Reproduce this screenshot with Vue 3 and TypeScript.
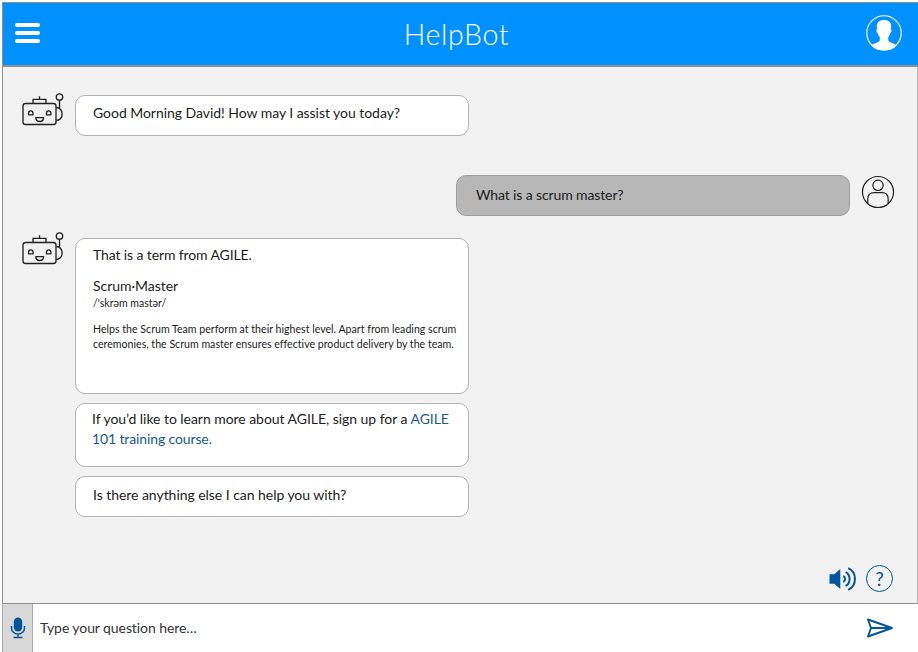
<script setup lang="ts">
import { ref } from 'vue'

const question = ref<string>('')
</script>

<template>
  <div class="app">
    <header class="header">
      <button class="menu" aria-label="Menu"><i /><i /><i /></button>
      <h1 class="title">HelpBot</h1>
      <svg class="account" viewBox="0 0 36 36">
        <circle cx="18" cy="18" r="17.2" fill="none" stroke="#fff" stroke-width="1.1" />
        <path
          fill="#fff"
          d="M18 5c4.800 0 7.300 2.600 7.100 6.600l-.2 2.700c1 .2.700 3-.6 3.800-.4 2-1.200 3.100-2.100 4.200v2.300c0 2.200 1.700 2.800 4.400 3.700 2.100.7 3.300 1.400 4 2.400A17 17 0 0 1 18 35.300 17 17 0 0 1 5.400 30.700c.7-1 1.900-1.700 4-2.400 2.700-.9 4.400-1.500 4.400-3.700v-2.300c-.9-1.100-1.700-2.200-2.100-4.200-1.300-.8-1.600-3.600-.6-3.800l-.2-2.700C10.700 7.600 13.200 5 18 5Z"
        />
      </svg>
    </header>

    <main class="chat">
      <section v-for="turn in ['greeting', 'question', 'answer']" :key="turn" class="turn" :class="turn">
        <svg v-if="turn !== 'question'" class="bot" viewBox="0 0 42 34">
          <g fill="none" stroke="#222" stroke-width="1.35" stroke-linejoin="round">
            <rect x="1" y="10.500" width="33" height="21" rx="2.600" />
            <path d="M11 10.300V6.300h13v4M17.500 6V3.200M37.500 7.500v7.500M34.300 14.500c3.500.4 5.800 3.100 5.800 6.500s-2.300 6.100-5.800 6.500" />
            <circle cx="37.500" cy="4" r="3.200" />
            <path d="M6.600 21.800v-1.500a2.200 2.500 0 0 1 4.400 0v1.500ZM24.500 21.800v-1.500a2.200 2.500 0 0 1 4.400 0v1.500ZM13.800 24.600h7.800c-.3 5.200-7.500 5.200-7.800 0Z" />
          </g>
        </svg>

        <div v-if="turn === 'greeting'" class="bubble short">
          <p class="line hello">Good Morning David! How may I assist you today?</p>
        </div>

        <div v-else-if="turn === 'question'" class="bubble short user">
          <p class="line ask">What is a scrum master?</p>
        </div>

        <div v-else class="stack">
          <article class="bubble definition">
            <p class="line intro">That is a term from AGILE.</p>
            <h2 class="line term">Scrum·Master</h2>
            <p class="phonetic">/'skrəm mastər/</p>
            <p class="meaning">
              Helps the Scrum Team perform at their highest level. Apart from leading scrum<br />
              ceremonies, the Scrum master ensures effective product delivery by the team.
            </p>
          </article>
          <div class="bubble course">
            <p class="line">If you’d like to learn more about AGILE, sign up for a <a>AGILE<br /><span class="rest">101 training course.</span></a></p>
          </div>
          <div class="bubble short closing">
            <p class="line">Is there anything else I can help you with?</p>
          </div>
        </div>

        <svg v-if="turn === 'question'" class="person" viewBox="0 0 34 34">
          <g fill="none" stroke="#222" stroke-width="1.2">
            <circle cx="17" cy="17" r="15.500" />
            <circle cx="17" cy="10.300" r="5.200" />
            <path d="M6.800 28.500V24c0-3.900 2.500-6.300 6.200-6.300h8c3.700 0 6.200 2.400 6.200 6.300v4.500" />
          </g>
        </svg>
      </section>

      <div class="tools">
        <svg class="sound" viewBox="0 0 28 24">
          <path fill="#00569a" d="M.5 7.300h4.800L11.300 2v20l-6-5.300H.5Z" />
          <g fill="none" stroke="#00569a" stroke-width="2">
            <path d="M14.300 9c2.300 1 2.300 5 0 6M16.600 5.100c5.300 2.700 5.300 11.100 0 13.800M19.200 1.200c9 4.200 9 17.400 0 21.600" />
          </g>
        </svg>
        <span class="help">?</span>
      </div>
    </main>

    <footer class="composer">
      <button class="mic" aria-label="Speak">
        <svg viewBox="0 0 16 22">
          <rect x="3.800" y="0.500" width="8.400" height="14" rx="4.200" fill="#00569a" />
          <path d="M1.500 9v2.200a6.500 5.800 0 0 0 13 0V9M8 17v3.500M3.500 20.400h9" fill="none" stroke="#00569a" stroke-width="1.500" />
        </svg>
      </button>
      <input v-model="question" class="entry" placeholder="Type your question here…" />
      <svg class="send" viewBox="0 0 28 20">
        <path d="M2 1.500 26 10 2 18.500 5 10ZM5 10h20" fill="none" stroke="#00569a" stroke-width="1.900" stroke-linejoin="round" />
      </svg>
    </footer>
  </div>
</template>

<style>
body {
  margin: 0;
  background: #fff;
  overflow: hidden;
}
</style>

<style scoped>
.app {
  box-sizing: border-box;
  width: 918px;
  height: 650px;
  margin-top: 2px;
  padding-left: 2px;
  display: flex;
  flex-direction: column;
  font-family: Lato, "Noto Sans", sans-serif;
  font-variant-ligatures: none;
  color: #1c1c1c;
}
.header {
  box-sizing: border-box;
  height: 65px;
  display: grid;
  grid-template-columns: 50px 1fr 52px;
  align-items: center;
  background: #0091ff;
  border: solid #8c8f94;
  border-width: 1px 0 2px 1px;
}
button {
  border: 0;
  padding: 0;
  background: none;
}
.menu {
  margin: 0 0 3px 12px;
  width: 25px;
  display: flex;
  flex-direction: column;
  gap: 4px;
}
.menu i {
  height: 4px;
  border-radius: 2px;
  background: #fff;
}
.title {
  margin: 0 6px 0 0;
  text-align: center;
  color: #fff;
  font-size: 28.500px;
  font-weight: 300;
  letter-spacing: 0.650px;
}
.account {
  width: 36px;
  height: 36px;
  margin-top: -2px;
}
.chat {
  box-sizing: border-box;
  flex: 1;
  min-height: 0;
  background: #f2f2f2;
  border: solid #8f8f8f;
  border-width: 0 0 1px 1px;
  border-right: 1px solid #b9b9b9;
  display: flex;
  flex-direction: column;
}
.turn {
  display: flex;
  align-items: flex-start;
}
.greeting {
  padding: 28px 0 0 19px;
}
.question {
  padding: 39px 22px 0 0;
  justify-content: flex-end;
}
.answer {
  padding: 22px 0 0 19px;
}
.bot {
  width: 42px;
  height: 34px;
  margin: -2.500px 11px 0 0;
  flex: none;
}
.answer .bot {
  margin-top: -6.500px;
}
.bubble {
  box-sizing: border-box;
  width: 394px;
  border: 1px solid #b3b3b3;
  border-radius: 10px;
  background: #fff;
  padding: 0 0 0 17px;
  white-space: nowrap;
}
.short {
  height: 41px;
  padding-top: 7px;
}
.closing {
  padding-top: 8px;
}
.user {
  background: #b7b7b7;
  border-color: #9f9f9f;
  padding-left: 19px;
  padding-top: 9px;
}
.person {
  width: 34px;
  height: 34px;
  margin-left: 11px;
}
.stack {
  display: flex;
  flex-direction: column;
  gap: 9px;
}
.line {
  margin: 0;
  font-size: 14px;
  line-height: 20px;
  font-weight: 400;
  letter-spacing: -0.045px;
}
.ask,
.intro,
.rest {
  letter-spacing: -0.120px;
}
.definition {
  height: 156px;
  padding-top: 6px;
}
.term {
  margin-top: 11px;
}
.phonetic {
  margin: 0;
  font-size: 10.500px;
  line-height: 14px;
}
.meaning {
  margin: 12px 0 0;
  font-size: 10.620px;
  line-height: 15px;
}
.course {
  height: 64px;
  padding: 5px 0 0 16px;
}
a {
  color: #1a5a8a;
}
.tools {
  margin-top: auto;
  padding: 0 24px 11px 0;
  display: flex;
  justify-content: flex-end;
  align-items: center;
  gap: 9px;
}
.sound {
  width: 28px;
  height: 24px;
}
.help {
  box-sizing: border-box;
  width: 27px;
  height: 27px;
  border: 1.500px solid #00569a;
  border-radius: 50%;
  color: #00569a;
  text-align: center;
  font-size: 19px;
  line-height: 25px;
}
.composer {
  box-sizing: border-box;
  height: 48px;
  border-left: 1px solid #aaa;
  display: flex;
  align-items: center;
}
.mic {
  box-sizing: border-box;
  width: 30px;
  height: 48px;
  background: #d8d8d8;
  border-right: 1px solid #aaa;
  display: flex;
  justify-content: center;
  align-items: center;
}
.mic svg {
  width: 16px;
  height: 22px;
}
.entry {
  flex: 1;
  border: 0;
  outline: 0;
  padding: 0 0 2px 7px;
  font: 14px Lato, sans-serif;
  letter-spacing: -0.080px;
  background: none;
}
.entry::placeholder {
  color: #333;
  opacity: 1;
}
.send {
  width: 28px;
  height: 20px;
  margin-right: 24px;
}
</style>
